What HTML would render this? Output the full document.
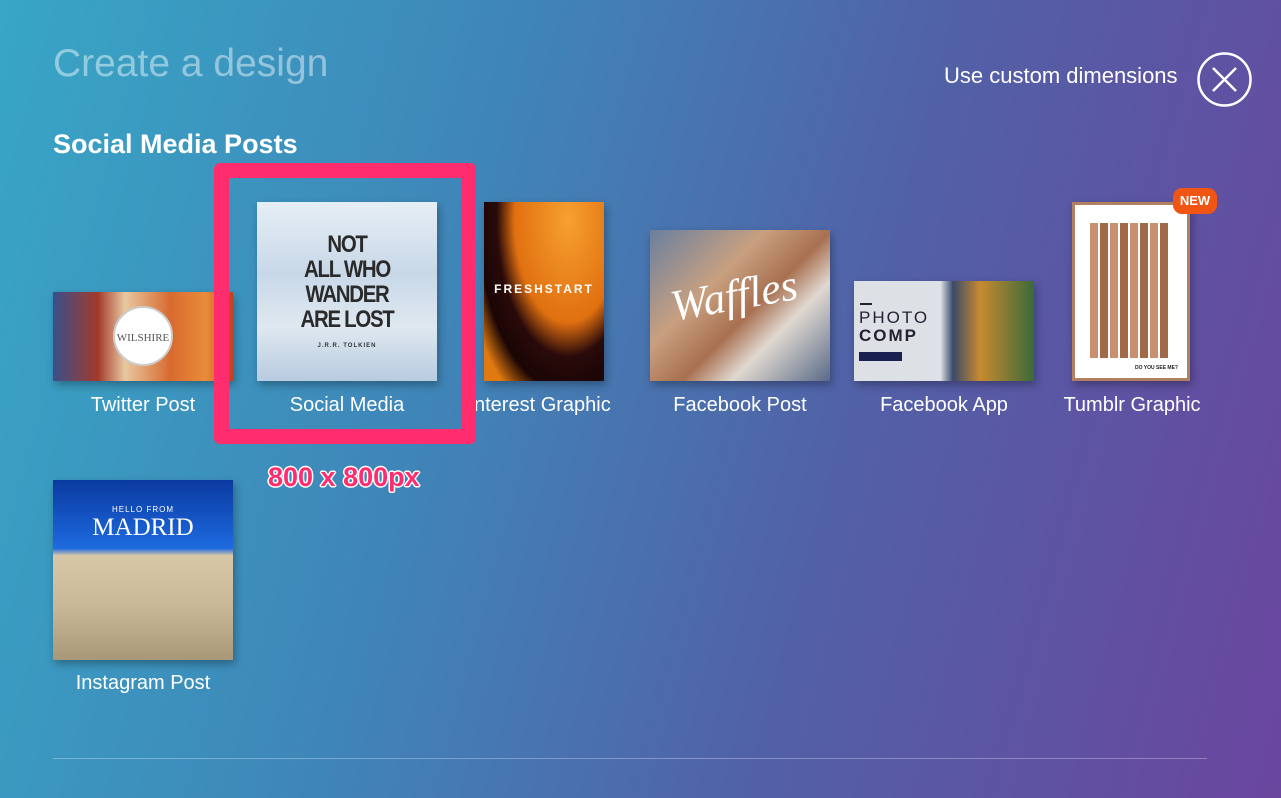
<!DOCTYPE html>
<html><head><meta charset="utf-8"><style>
*{margin:0;padding:0;box-sizing:border-box}
html,body{width:1281px;height:798px;overflow:hidden}
body{font-family:"Liberation Sans",sans-serif;color:#fff;position:relative;
background:linear-gradient(105deg,#38a6c6 0%,#3f86b8 35%,#5260a6 65%,#6a469f 100%);}
.a{position:absolute}
.t{position:absolute;box-shadow:2px 4px 8px rgba(0,0,0,.3);overflow:hidden}
.lbl{position:absolute;font-size:20px;text-align:center;width:240px;top:394px}
</style></head><body>
<div class="a" style="left:53px;top:42px;font-size:39px;font-weight:300;color:rgba(255,255,255,.45)">Create a design</div>
<div class="a" style="left:53px;top:129px;font-size:27px;font-weight:bold">Social Media Posts</div>
<div class="a" style="left:944px;top:63px;font-size:22px">Use custom dimensions</div>
<svg class="a" style="left:1196px;top:51px" width="57" height="57"><circle cx="28.5" cy="28.5" r="26" fill="none" stroke="#fff" stroke-width="2.5"/><path d="M17 17L40 40M40 17L17 40" stroke="#fff" stroke-width="2.5"/></svg>

<div class="t" style="left:53px;top:292px;width:180px;height:89px;background:linear-gradient(90deg,#3a4f8c 0%,#a23a2a 25%,#e8c8a0 40%,#d86a30 65%,#e88c3a 85%,#c04020 100%)">
<div class="a" style="left:60px;top:14px;width:60px;height:60px;border-radius:50%;background:#fff;border:2px solid #ccc;color:#555;font-family:'Liberation Serif',serif;font-size:11px;text-align:center;line-height:60px">WILSHIRE</div></div>
<div class="lbl" style="left:23px">Twitter Post</div>

<div class="t" style="left:257px;top:202px;width:180px;height:179px;background:linear-gradient(180deg,#e6eef5 0%,#c8d8e8 40%,#dfe8f0 70%,#b8cbe0 100%)">
<div class="a" style="left:0;width:180px;top:30px;text-align:center;color:#2a2a2a;font-weight:bold;font-size:24px;line-height:25px;letter-spacing:-1.5px;transform:scaleX(.85)">NOT<br>ALL WHO<br>WANDER<br>ARE LOST</div>
<div class="a" style="left:0;width:180px;top:141px;text-align:center;color:#333;font-size:6px;font-weight:bold;letter-spacing:1px">J.R.R. TOLKIEN</div></div>
<div class="lbl" style="left:227px">Social Media</div>

<div class="t" style="left:484px;top:202px;width:120px;height:179px;background:radial-gradient(ellipse at 70% 10%,#f7a030 0%,#e07010 45%,#2a0a0a 60%,#1a0505 75%,#e07a10 90%)">
<div class="a" style="left:0;width:120px;top:80px;text-align:center;font-size:12px;font-weight:bold;letter-spacing:2px">FRESHSTART</div></div>
<div class="a" style="left:474px;top:394px;font-size:20px;width:160px">nterest Graphic</div>

<div class="t" style="left:650px;top:230px;width:180px;height:151px;background:linear-gradient(135deg,#6a7fa0 0%,#c8a080 35%,#a87050 55%,#e0d8d0 70%,#5a6a88 100%)">
<div class="a" style="left:20px;top:40px;font-family:'Liberation Serif',serif;font-style:italic;font-size:44px;transform:rotate(-10deg)">Waffles</div></div>
<div class="lbl" style="left:620px">Facebook Post</div>

<div class="t" style="left:854px;top:281px;width:180px;height:100px;background:linear-gradient(90deg,#dde0e4 0%,#dde0e4 48%,#3a4a6a 55%,#c88a30 70%,#3a6a3a 100%)">
<div class="a" style="left:6px;top:22px;width:12px;height:2px;background:#223"></div>
<div class="a" style="left:5px;top:28px;color:#223;font-size:17px;line-height:18px;letter-spacing:2px">PHOTO<br><b>COMP</b></div>
<div class="a" style="left:5px;top:71px;width:43px;height:9px;background:#1a2050"></div></div>
<div class="lbl" style="left:824px">Facebook App</div>

<div class="t" style="left:1072px;top:202px;width:118px;height:179px;background:#fff;border:3px solid #b08060">
<div class="a" style="left:15px;top:18px;width:80px;height:135px;background:repeating-linear-gradient(90deg,#c89070 0 8px,#fff 8px 10px,#a06a48 10px 18px,#fff 18px 20px)"></div>
<div class="a" style="left:60px;top:160px;font-size:5px;color:#222;font-weight:bold">DO YOU SEE ME?</div></div>
<div class="a" style="left:1173px;top:188px;width:44px;height:26px;border-radius:9px;background:#f05514;font-size:13px;font-weight:bold;text-align:center;line-height:26px">NEW</div>
<div class="lbl" style="left:1012px">Tumblr Graphic</div>

<div class="a" style="left:214px;top:163px;width:262px;height:281px;border:15px solid #ff2d6e;border-radius:6px"></div>
<div class="a" style="left:268px;top:462px;font-size:27px;font-weight:bold;color:#ff2d6e;text-shadow:-1.5px 0 #fff,1.5px 0 #fff,0 -1.5px #fff,0 1.5px #fff,1px 1px #fff,-1px -1px #fff,1px -1px #fff,-1px 1px #fff">800 x 800px</div>

<div class="t" style="left:53px;top:480px;width:180px;height:180px;background:linear-gradient(180deg,#0a3aa0 0%,#1e6ae0 38%,#d8c8a8 42%,#c8b898 70%,#a89878 100%)">
<div class="a" style="left:0;width:180px;top:25px;text-align:center;font-size:8px;letter-spacing:1px">HELLO FROM</div>
<div class="a" style="left:0;width:180px;top:34px;text-align:center;font-family:'Liberation Serif',serif;font-size:25px">MADRID</div></div>
<div class="a" style="left:23px;top:672px;font-size:20px;width:240px;text-align:center">Instagram Post</div>

<div class="a" style="left:53px;top:758px;width:1154px;height:1px;background:rgba(255,255,255,.3)"></div>
</body></html>
